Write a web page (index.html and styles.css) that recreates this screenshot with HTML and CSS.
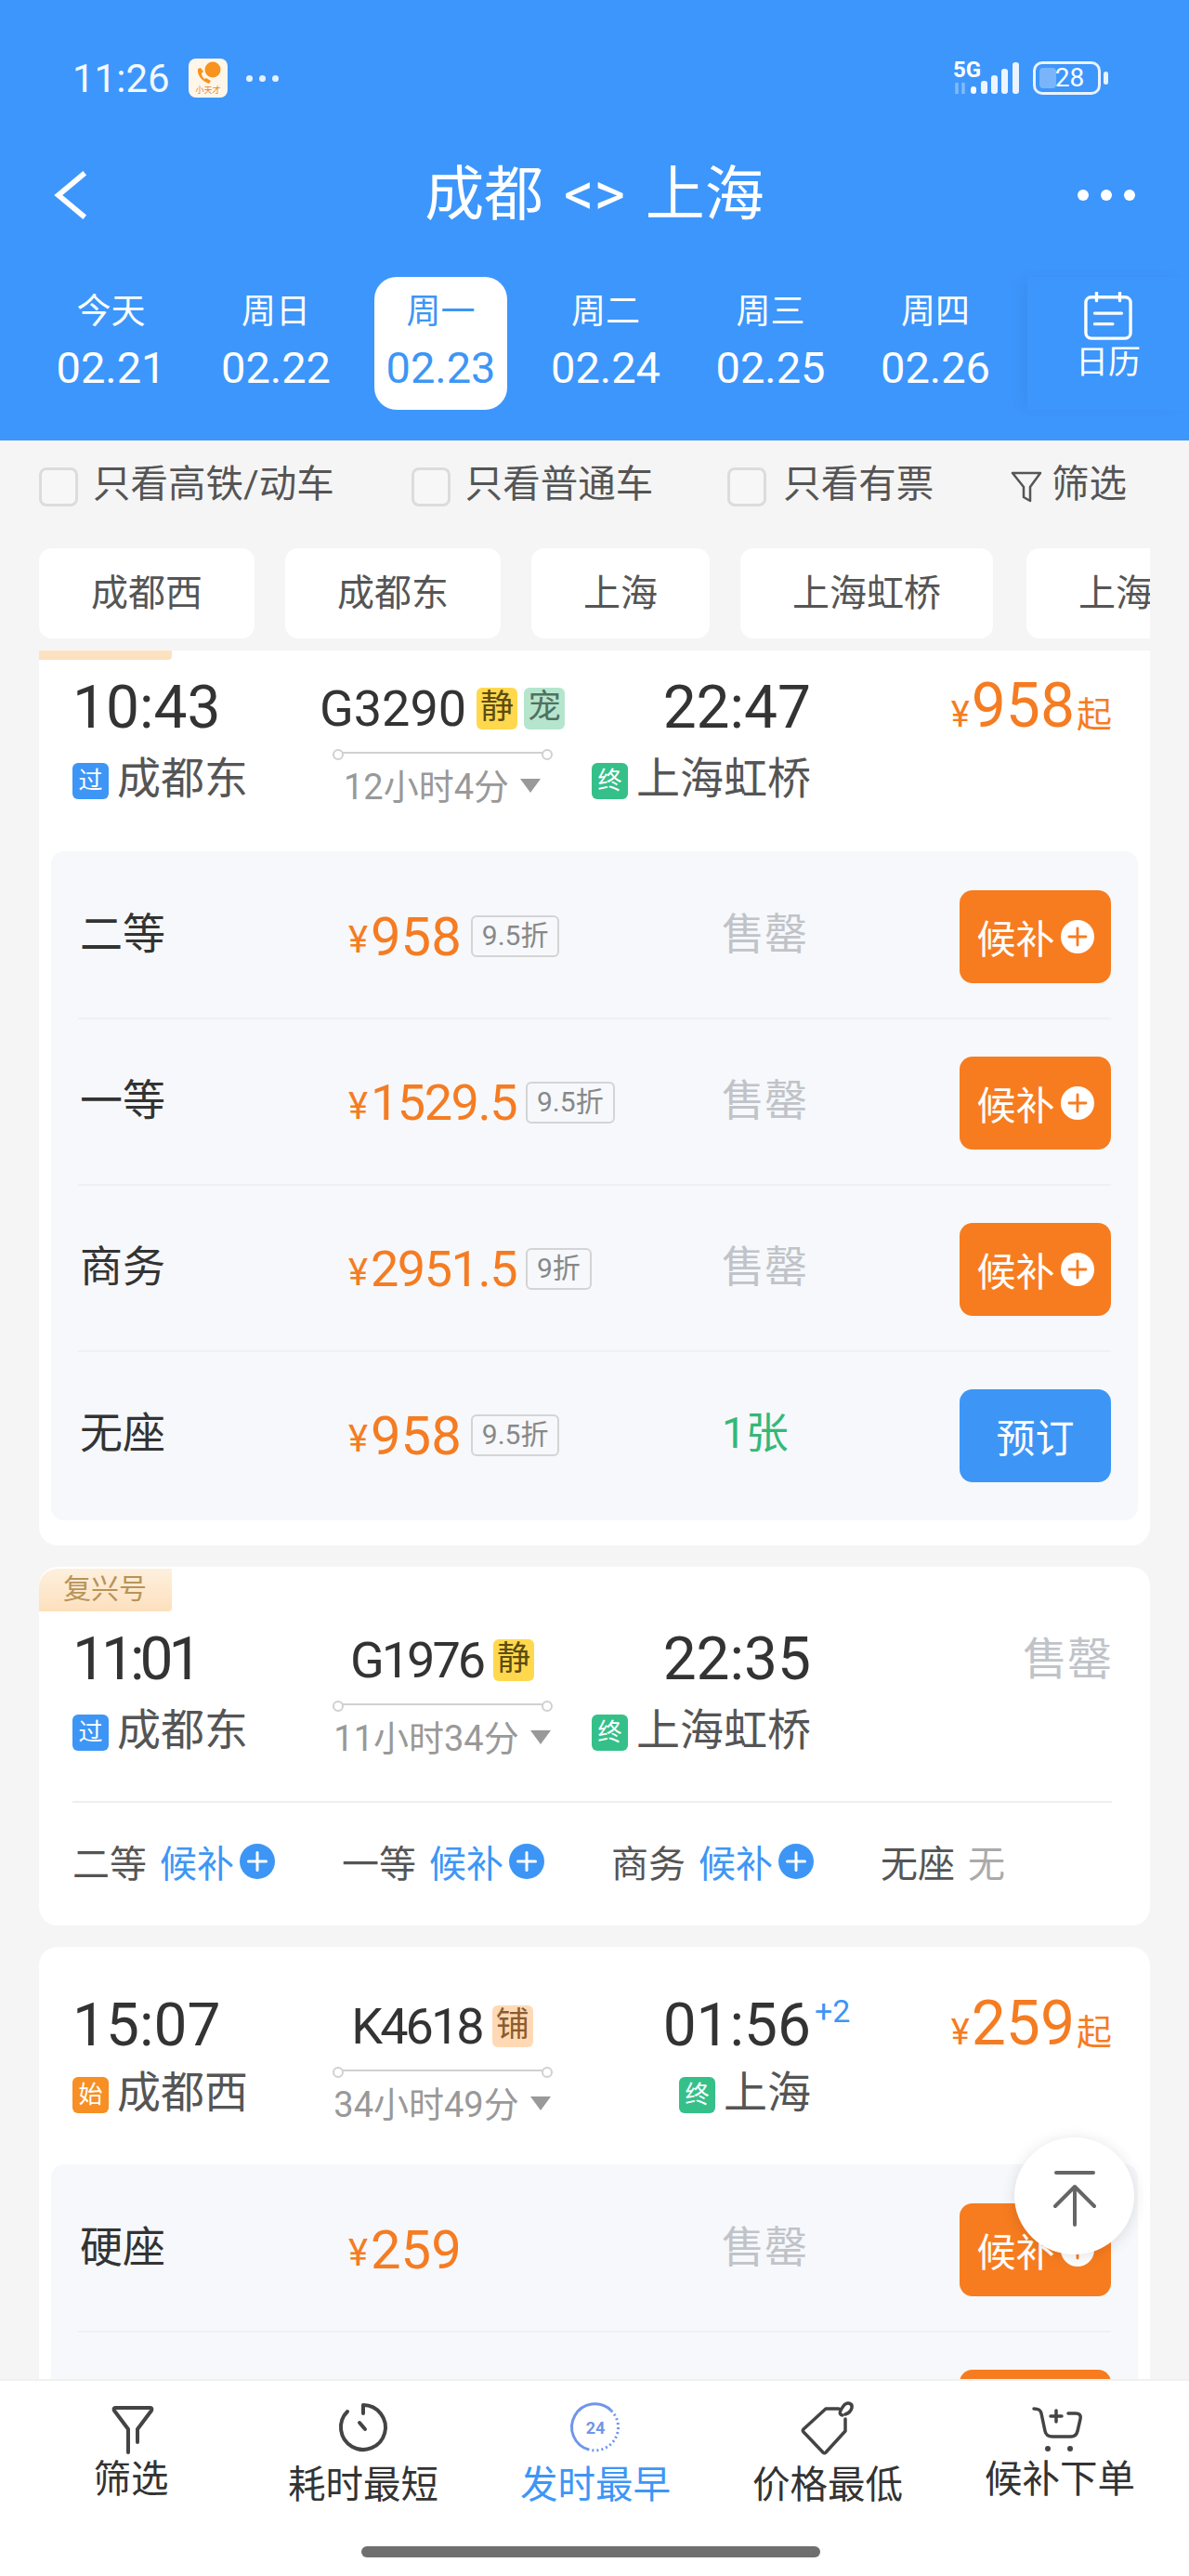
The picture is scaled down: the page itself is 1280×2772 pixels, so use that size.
FILE: index.html
```html
<!DOCTYPE html>
<html lang="zh-CN">
<head>
    <meta charset="UTF-8">
    <meta name="viewport" content="width=device-width, initial-scale=1.0">
    <title>成都 &lt;&gt; 上海</title>
    <link rel="stylesheet" href="styles.css">
</head>
<body>
    <svg class="defs" width="0" height="0">
        <symbol id="plus" viewBox="0 0 38 38">
            <circle cx="19" cy="19" r="19" fill="currentColor"/>
            <path d="M19 9.5v19M9.5 19h19" fill="none" stroke="var(--plus-color)" stroke-width="3" stroke-linecap="round"/>
        </symbol>
    </svg>

    <div class="page">
        <header class="header">
            <div class="status">
                <span class="clock">11:26</span>
                <svg class="app-icon" viewBox="0 0 42 42">
                    <rect width="42" height="42" rx="8" fill="#fff6ea"/>
                    <circle cx="26" cy="12" r="8.5" fill="#f7931e"/>
                    <path d="M10 11c-1 7 4 13 12 16l2-3-5-3-2 1c-2-2-3-4-3-6l2-2-3-4z" fill="#f7931e"/>
                    <text x="21" y="37" class="app-name">小天才</text>
                </svg>
                <div class="status-dots"><i></i><i></i><i></i></div>
                <div class="status-right">
                    <svg class="signal" viewBox="0 -6 74 52">
                        <text x="2" y="19" class="net">5G</text>
                        <path d="M6 25v12M13 25v12" stroke="#fff" stroke-opacity=".35" stroke-width="3.5"/>
                        <rect x="21" y="29" width="6" height="8" rx="3" fill="#fff"/>
                        <rect x="32" y="23" width="7" height="14" rx="3" fill="#fff" fill-opacity=".9"/>
                        <rect x="43" y="17" width="7" height="20" rx="3" fill="#fff" fill-opacity=".9"/>
                        <rect x="54" y="10" width="7" height="27" rx="3" fill="#fff" fill-opacity=".9"/>
                        <rect x="66" y="3" width="7" height="34" rx="3" fill="#fff" fill-opacity=".9"/>
                    </svg>
                    <div class="battery"><i class="battery-fill"></i><span>28</span></div>
                    <i class="battery-nub"></i>
                </div>
            </div>
            <div class="titlebar">
                <svg class="back" viewBox="0 0 40 54"><path d="M35 2L5 27l30 25" fill="none" stroke="#fff" stroke-width="6"/></svg>
                <h1>成都 &lt;&gt; 上海</h1>
                <div class="more"><i></i><i></i><i></i></div>
            </div>
            <div class="dates">
                <div class="date"><span>今天</span><b>02.21</b></div>
                <div class="date"><span>周日</span><b>02.22</b></div>
                <div class="date active"><span>周一</span><b>02.23</b></div>
                <div class="date"><span>周二</span><b>02.24</b></div>
                <div class="date"><span>周三</span><b>02.25</b></div>
                <div class="date"><span>周四</span><b>02.26</b></div>
                <div class="calendar">
                    <svg viewBox="0 0 56 54">
                        <rect x="3" y="6" width="50" height="46" rx="6" fill="none" stroke="#fff" stroke-width="3.5"/>
                        <path d="M15 1v9M41 1v9M13 24h30M13 36h20" fill="none" stroke="#fff" stroke-width="3.5" stroke-linecap="round"/>
                    </svg>
                    <span>日历</span>
                </div>
            </div>
        </header>

        <div class="filters">
            <label class="check"><i></i>只看高铁/动车</label>
            <label class="check"><i></i>只看普通车</label>
            <label class="check"><i></i>只看有票</label>
            <div class="filter-btn">
                <svg viewBox="0 0 34 36"><path d="M2 3h30L21 18v15l-7-4V18z" fill="none" stroke="#555" stroke-width="2.5" stroke-linejoin="round"/></svg>
                筛选
            </div>
        </div>

        <div class="chips">
            <span class="chip">成都西</span>
            <span class="chip">成都东</span>
            <span class="chip">上海</span>
            <span class="chip">上海虹桥</span>
            <span class="chip">上海</span>
        </div>

        <main class="list">
            <div class="scroll">
                <section class="card">
                    <div class="badge"></div>
                    <div class="train">
                        <div class="col">
                            <div class="time">10:43</div>
                            <div class="station"><i class="tag blue">过</i>成都东</div>
                        </div>
                        <div class="col mid">
                            <div class="no">G3290<i class="flag yellow">静</i><i class="flag green">宠</i></div>
                            <div class="line"></div>
                            <div class="dur">12小时4分<i class="tri"></i></div>
                        </div>
                        <div class="col end">
                            <div class="time">22:47</div>
                            <div class="station"><i class="tag teal">终</i>上海虹桥</div>
                        </div>
                        <div class="col end">
                            <div class="price"><small>¥</small>958<small class="from">起</small></div>
                        </div>
                    </div>
                    <div class="seats">
                        <div class="seat">
                            <div class="seat-name">二等</div>
                            <div class="seat-price"><small>¥</small>958<i class="off">9.5折</i></div>
                            <div class="sold">售罄</div>
                            <div class="btn orange">候补<svg class="plus"><use href="#plus"/></svg></div>
                        </div>
                        <div class="seat">
                            <div class="seat-name">一等</div>
                            <div class="seat-price long"><small>¥</small>1529.5<i class="off">9.5折</i></div>
                            <div class="sold">售罄</div>
                            <div class="btn orange">候补<svg class="plus"><use href="#plus"/></svg></div>
                        </div>
                        <div class="seat">
                            <div class="seat-name">商务</div>
                            <div class="seat-price long"><small>¥</small>2951.5<i class="off">9折</i></div>
                            <div class="sold">售罄</div>
                            <div class="btn orange">候补<svg class="plus"><use href="#plus"/></svg></div>
                        </div>
                        <div class="seat">
                            <div class="seat-name">无座</div>
                            <div class="seat-price"><small>¥</small>958<i class="off">9.5折</i></div>
                            <div class="left">1张</div>
                            <div class="btn blue-btn">预订</div>
                        </div>
                    </div>
                </section>

                <section class="card">
                    <div class="badge">复兴号</div>
                    <div class="train">
                        <div class="col">
                            <div class="time narrow">11:01</div>
                            <div class="station"><i class="tag blue">过</i>成都东</div>
                        </div>
                        <div class="col mid">
                            <div class="no"><span class="narrow-no">G1976</span><i class="flag yellow">静</i></div>
                            <div class="line"></div>
                            <div class="dur">11小时34分<i class="tri"></i></div>
                        </div>
                        <div class="col end">
                            <div class="time">22:35</div>
                            <div class="station"><i class="tag teal">终</i>上海虹桥</div>
                        </div>
                        <div class="col end">
                            <div class="sold-big">售罄</div>
                        </div>
                    </div>
                    <div class="brief">
                        <div class="brief-item">二等<em>候补</em><svg class="plus small"><use href="#plus"/></svg></div>
                        <div class="brief-item">一等<em>候补</em><svg class="plus small"><use href="#plus"/></svg></div>
                        <div class="brief-item">商务<em>候补</em><svg class="plus small"><use href="#plus"/></svg></div>
                        <div class="brief-item last">无座<em class="none">无</em></div>
                    </div>
                </section>

                <section class="card plain">
                    <div class="train tight">
                        <div class="col">
                            <div class="time">15:07</div>
                            <div class="station"><i class="tag amber">始</i>成都西</div>
                        </div>
                        <div class="col mid">
                            <div class="no"><span class="narrow-no">K4618</span><i class="flag peach">铺</i></div>
                            <div class="line"></div>
                            <div class="dur">34小时49分<i class="tri"></i></div>
                        </div>
                        <div class="col end">
                            <div class="time">01:56<sup class="days">+2</sup></div>
                            <div class="station"><i class="tag teal">终</i>上海</div>
                        </div>
                        <div class="col end">
                            <div class="price"><small>¥</small>259<small class="from">起</small></div>
                        </div>
                    </div>
                    <div class="seats">
                        <div class="seat">
                            <div class="seat-name">硬座</div>
                            <div class="seat-price"><small>¥</small>259</div>
                            <div class="sold">售罄</div>
                            <div class="btn orange">候补<svg class="plus"><use href="#plus"/></svg></div>
                        </div>
                        <div class="seat">
                            <div class="seat-name"></div>
                            <div class="seat-price"></div>
                            <div class="sold"></div>
                            <div class="btn orange"></div>
                        </div>
                    </div>
                </section>
            </div>
        </main>

        <nav class="tabbar">
            <div class="tab-item short">
                <svg viewBox="0 0 60 60"><path d="M13 8h38c1 0 2 1 1 3L37 31v14M27 56V31L12 11c-1-2 0-3 1-3" fill="none" stroke="#444" stroke-width="4" stroke-linecap="round" stroke-linejoin="round"/></svg>
                <span>筛选</span>
            </div>
            <div class="tab-item">
                <svg viewBox="0 0 60 60"><path d="M30 5v9M30 5a24 24 0 1 1-17 7M26 24l6 7" fill="none" stroke="#444" stroke-width="4" stroke-linecap="round"/></svg>
                <span>耗时最短</span>
            </div>
            <div class="tab-item on">
                <svg viewBox="0 0 60 60">
                    <path d="M47 11A25 25 0 1 0 23 53" fill="none" stroke="#6f96ea" stroke-width="3"/>
                    <path d="M47 11A25 25 0 0 1 23 53" fill="none" stroke="#6f96ea" stroke-width="3" stroke-dasharray="2 3"/>
                    <text x="30" y="36" class="early">24</text>
                </svg>
                <span>发时最早</span>
            </div>
            <div class="tab-item">
                <svg viewBox="0 0 60 60"><path d="M42 9H28L4 31c-1 1-1 2 0 3l21 22c1 1 2 1 3 0l21-23V20M46 16c-5-1-2-6 1-10 4-5 10-3 9 2-1 4-4 6-7 7" fill="none" stroke="#444" stroke-width="3.5" stroke-linecap="round" stroke-linejoin="round"/></svg>
                <span>价格最低</span>
            </div>
            <div class="tab-item short">
                <svg viewBox="0 0 60 60">
                    <path d="M2 9c5 0 7 1 8 5l4 19c1 5 4 6 8 6h20c4 0 6-2 7-6l3-13c1-4-1-6-5-6H39M26 11v12M20 17h12" fill="none" stroke="#444" stroke-width="3.5" stroke-linecap="round" stroke-linejoin="round"/>
                    <circle cx="17" cy="52" r="3" fill="#444"/><circle cx="41" cy="52" r="3" fill="#444"/>
                </svg>
                <span>候补下单</span>
            </div>
            <div class="home-bar"></div>
        </nav>

        <div class="to-top">
            <svg viewBox="0 0 46 60"><path d="M3 2h40M23 17v41M2 38l21-21 21 21" fill="none" stroke="#666" stroke-width="4" stroke-linecap="round" stroke-linejoin="round"/></svg>
        </div>
    </div>
</body>
</html>
```
FILE: styles.css
```css
* {
    box-sizing: border-box;
}
html, body {
    margin: 0;
    padding: 0;
}
body {
    font-family: Roboto, "Noto Sans CJK SC", sans-serif;
    color: #333;
    background: #f5f5f5;
}
i, em {
    font-style: normal;
}
.defs {
    position: absolute;
}
.page {
    position: relative;
    width: 1280px;
    height: 2772px;
    display: flex;
    flex-direction: column;
    overflow: hidden;
    background: #f5f5f5;
    --plus-color: #fff;
}

/* header */
.header {
    height: 474px;
    flex: none;
    padding-top: 63px;
    background: #3d96fb;
    color: white;
}
.status {
    height: 42px;
    display: flex;
    align-items: center;
    padding: 0 87px 0 78px;
}
.clock {
    font-size: 42px;
    width: 125px;
    color: #f3f8ff;
}
.app-icon {
    width: 42px;
    height: 42px;
}
.app-name {
    font-size: 9px;
    text-anchor: middle;
    fill: #e8821a;
}
.status-dots {
    margin-left: 20px;
    display: flex;
    gap: 7px;
}
.status-dots i {
    width: 7px;
    height: 7px;
    border-radius: 50%;
    background: #e6f0ff;
}
.status-right {
    margin-left: auto;
    display: flex;
    align-items: center;
}
.signal {
    width: 74px;
    height: 52px;
    margin-right: 14px;
}
.net {
    font-size: 24px;
    font-weight: 700;
    fill: #fff;
}
.battery {
    position: relative;
    width: 73px;
    height: 36px;
    border: 3px solid #eaf3ff;
    border-radius: 10px;
    font-size: 28px;
    line-height: 30px;
    text-align: center;
}
.battery span {
    position: relative;
    padding-left: 6px;
}
.battery-fill {
    position: absolute;
    left: 4px;
    top: 4px;
    bottom: 4px;
    width: 18px;
    border-radius: 4px;
    background: #7ab4fb;
}
.battery-nub {
    width: 5px;
    height: 14px;
    margin-left: 3px;
    border-radius: 3px;
    background: #eaf3ff;
}
.titlebar {
    height: 80px;
    margin-top: 65px;
    padding: 0 58px;
    display: flex;
    align-items: center;
}
.back {
    width: 38px;
    height: 52px;
    margin-right: 24px;
}
.titlebar h1 {
    flex: 1;
    margin: 0;
    font-size: 64px;
    font-weight: 400;
    line-height: 80px;
    text-align: center;
    word-spacing: 6px;
}
.more {
    width: 62px;
    display: flex;
    gap: 13px;
}
.more i {
    width: 12px;
    height: 12px;
    border-radius: 50%;
    background: white;
}
.dates {
    display: flex;
    height: 143px;
    margin-top: 48px;
    padding-left: 48px;
    gap: 34.5px;
}
.date {
    width: 143px;
    flex: none;
    padding-top: 16px;
    border-radius: 24px;
    text-align: center;
}
.date span {
    display: block;
    font-size: 37px;
    line-height: 44px;
}
.date b {
    display: block;
    margin-top: 15px;
    font-size: 47px;
    font-weight: 400;
    line-height: 46px;
}
.date.active {
    background: white;
    color: #3d96f5;
}
.calendar {
    flex: none;
    width: 175px;
    margin-left: -7.5px;
    padding-top: 16px;
    text-align: center;
    box-shadow: -10px 0 14px -6px rgba(40, 90, 170, 0.14);
}
.calendar svg {
    display: block;
    width: 56px;
    height: 52px;
    margin: 0 auto;
}
.calendar span {
    display: block;
    margin-top: 3px;
    font-size: 35px;
    line-height: 44px;
}

/* checkbox row */
.filters {
    height: 116px;
    flex: none;
    padding: 0 67px 22px 42px;
    display: flex;
    align-items: center;
    font-size: 40.5px;
    color: #555;
    white-space: nowrap;
}
.check {
    flex: none;
    display: flex;
    align-items: center;
    margin-right: 83px;
    line-height: 48px;
}
.check:nth-child(2) {
    margin-right: 80px;
}
.check:nth-child(3) {
    margin-right: 0;
}
.check i {
    width: 42px;
    height: 42px;
    margin: 6px 16px 0 0;
    border: 3px solid #dcdcdc;
    border-radius: 8px;
    background: #f7f7f7;
}
.check:nth-child(3) i {
    margin-right: 18px;
}
.filter-btn {
    flex: none;
    margin-left: auto;
    display: flex;
    align-items: center;
    line-height: 48px;
}
.filter-btn svg {
    width: 34px;
    height: 36px;
    margin: 6px 10px 0 0;
}

/* station chips */
.chips {
    flex: none;
    height: 97px;
    margin: 0 42px 13px;
    display: flex;
    gap: 33px;
    overflow: hidden;
}
.chip {
    flex: none;
    padding: 0 56px;
    border-radius: 14px;
    background: white;
    font-size: 40px;
    line-height: 97px;
    color: #555;
}
.chip:last-child {
    margin-left: 3px;
}

/* train list */
.list {
    flex: 1;
    min-height: 0;
    margin: 0 42px;
    overflow: hidden;
}
.scroll {
    margin-top: -38px;
    display: flex;
    flex-direction: column;
    gap: 23px;
}
.card {
    position: relative;
    flex: none;
    padding-top: 72px;
    border-radius: 20px;
    background: white;
}
.card.plain {
    padding-top: 57px;
}
.badge {
    position: absolute;
    left: 0;
    top: 2px;
    width: 143px;
    height: 46px;
    border-radius: 20px 0 4px 0;
    background: linear-gradient(#fdf0de, #fde0bd);
    font-size: 30px;
    line-height: 44px;
    padding-left: 26px;
    color: #b8935a;
}
.train {
    display: grid;
    grid-template-columns: 254px 288px 253px 324px;
    min-height: 134px;
    margin: 0 41px 0 36px;
}
.col {
    display: flex;
    flex-direction: column;
    min-width: 0;
}
.col.mid {
    align-items: center;
}
.col.end {
    align-items: flex-end;
}
.time {
    position: relative;
    height: 56px;
    font-size: 64px;
    line-height: 56px;
    color: #333;
}
.time.narrow {
    letter-spacing: -5px;
}
.days {
    position: absolute;
    left: 100%;
    top: -6px;
    margin-left: 4px;
    font-size: 34px;
    line-height: 36px;
    color: #3d96f5;
}
.station {
    display: flex;
    align-items: flex-start;
    height: 40px;
    margin-top: 28px;
    font-size: 47px;
    line-height: 40px;
    color: #555;
}
.tight .station {
    margin-top: 24px;
}
.tag {
    flex: none;
    width: 39px;
    height: 39px;
    margin: 3px 9px 0 0;
    border-radius: 6px;
    font-size: 26px;
    line-height: 38px;
    text-align: center;
    color: white;
}
.tag.blue {
    background: #3d96f5;
}
.tag.teal {
    background: #35c08a;
}
.tag.amber {
    background: #f78f24;
}
.no {
    display: flex;
    align-items: center;
    height: 56px;
    font-size: 54px;
    color: #333;
}
.narrow-no {
    letter-spacing: -3px;
}
.flag {
    width: 44px;
    height: 45px;
    margin-left: 7px;
    border-radius: 6px;
    font-size: 36px;
    line-height: 43px;
    text-align: center;
}
.no .flag:first-of-type {
    margin-left: 11px;
}
.flag.yellow {
    background: #ffd84d;
    color: #5c4c10;
}
.flag.green {
    background: #b5e6cd;
    color: #527060;
}
.flag.peach {
    background: #ffd9b5;
    color: #8c5c30;
}
.line {
    position: relative;
    width: 233px;
    height: 2px;
    margin-top: 19px;
    background: #d0d0d0;
}
.line::before,
.line::after {
    content: "";
    position: absolute;
    top: -3px;
    width: 8px;
    height: 8px;
    border: 2px solid #d0d0d0;
    border-radius: 50%;
    background: white;
}
.line::before {
    left: -2px;
}
.line::after {
    right: -2px;
}
.dur {
    display: flex;
    align-items: center;
    height: 46px;
    margin-top: 9px;
    font-size: 38px;
    color: #999;
}
.tri {
    width: 0;
    height: 0;
    margin: 4px 0 0 12px;
    border-left: 11px solid transparent;
    border-right: 11px solid transparent;
    border-top: 15px solid #999;
}
.price {
    display: flex;
    align-items: baseline;
    height: 56px;
    margin-top: -7px;
    font-size: 66px;
    line-height: 66px;
    color: #f57c22;
}
.price small {
    font-size: 38px;
    margin-right: 2px;
}
.price .from {
    margin: 0 0 0 2px;
    font-size: 38px;
}
.sold-big {
    font-size: 48px;
    line-height: 56px;
    color: #c0c3c8;
}

/* seats panel */
.seats {
    margin: 48px 13px 27px;
    padding: 2px 29px 2px;
    border-radius: 14px;
    background: #f6f8fb;
}
.plain .seats {
    margin-top: 43px;
}
.seat {
    display: grid;
    grid-template-columns: 291px 402px 256px 163px;
    align-items: center;
    height: 179px;
    padding-top: 2px;
    border-bottom: 2px solid #eef0f3;
}
.seat:last-child {
    border-bottom-color: transparent;
}
.seat-name {
    padding: 0 0 14px 2px;
    font-size: 46px;
    color: #333;
}
.seat-price {
    display: flex;
    align-items: center;
    font-size: 58px;
    line-height: 64px;
    color: #f57c22;
}
.seat-price.long {
    font-size: 54px;
    letter-spacing: -1.5px;
}
.seat-price small {
    margin: 8px 3px 0 0;
    font-size: 40px;
    letter-spacing: 0;
}
.off {
    height: 45px;
    margin-left: 10px;
    padding: 0 10px;
    border: 2px solid #d4d4d4;
    border-radius: 6px;
    font-size: 30px;
    line-height: 40px;
    letter-spacing: 0;
    color: #888;
}
.sold {
    padding-bottom: 14px;
    font-size: 46px;
    color: #c0c3c8;
}
.left {
    padding-bottom: 14px;
    font-size: 46px;
    color: #35b878;
}
.btn {
    display: flex;
    align-items: center;
    justify-content: center;
    height: 100px;
    border-radius: 14px;
    font-size: 42px;
    color: white;
}
.orange {
    background: #f77c1f;
    --plus-color: #f77c1f;
}
.blue-btn {
    background: #3d96f5;
}
.plus {
    width: 36px;
    height: 36px;
    margin-left: 6px;
    color: white;
}
.plus.small {
    width: 38px;
    height: 38px;
    color: #3d96f5;
}

/* second card, folded seats */
.brief {
    display: flex;
    height: 134px;
    margin: 46px 41px 0 36px;
    padding: 0 0 6px 0;
    align-items: center;
    border-top: 2px solid #eee;
}
.brief-item {
    flex: none;
    display: flex;
    align-items: center;
    width: 290px;
    font-size: 40px;
    color: #555;
}
.brief-item.last {
    width: auto;
}
.brief-item em {
    margin-left: 14px;
    color: #3d96f5;
}
.brief-item em.none {
    color: #aaa;
}

/* bottom tabs */
.tabbar {
    position: relative;
    flex: none;
    height: 212px;
    padding-left: 16px;
    display: flex;
    border-top: 2px solid #f0f0f0;
    background: white;
}
.tab-item {
    width: 250px;
    padding-top: 21px;
    display: flex;
    flex-direction: column;
    align-items: center;
    color: #333;
}
.tab-item svg {
    width: 60px;
    height: 60px;
    flex: none;
}
.tab-item span {
    margin-top: 9px;
    font-size: 40.5px;
    line-height: 44px;
}
.tab-item.short span {
    margin-top: 3px;
}
.tab-item.on {
    color: #3d96f5;
}
.early {
    font-size: 18px;
    font-weight: 700;
    text-anchor: middle;
    fill: #6f96ea;
}
.home-bar {
    position: absolute;
    left: 389px;
    bottom: 20px;
    width: 494px;
    height: 12px;
    border-radius: 6px;
    background: #6f6f6f;
}
.to-top {
    position: absolute;
    left: 1092px;
    top: 2300px;
    width: 129px;
    height: 126px;
    padding-top: 36px;
    border-radius: 50%;
    background: white;
    box-shadow: 0 2px 16px rgba(0, 0, 0, 0.12);
}
.to-top svg {
    display: block;
    width: 46px;
    height: 60px;
    margin: 0 auto;
}
```
